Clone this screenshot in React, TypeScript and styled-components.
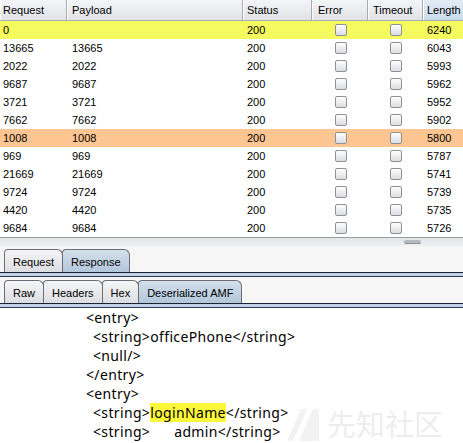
import React from "react";
import styled, { createGlobalStyle } from "styled-components";

const Global = createGlobalStyle`
  html, body { margin: 0; padding: 0; background: #ffffff; }
  body { width: 463px; height: 443px; overflow: hidden; font-family: "Liberation Sans", Arial, sans-serif; }
`;

const Page = styled.div`
  width: 463px;
  height: 443px;
  display: flex;
  flex-direction: column;
  position: relative;
  overflow: hidden;
  background: #ffffff;
`;

const COLS = "67px 176px 69px 56px 55px 40px";

const Table = styled.div`
  display: flex;
  flex-direction: column;
  border-bottom: 1px solid #9a9ca0;
`;

const HeaderRow = styled.div`
  display: grid;
  grid-template-columns: ${COLS};
  height: 20px;
  border-bottom: 1px solid #a9abaf;
`;

const HeaderCell = styled.div<{ $sorted?: boolean; $pad: number }>`
  display: flex;
  align-items: center;
  padding-left: ${(p) => p.$pad}px;
  font-size: 11px;
  color: #000;
  background: ${(p) =>
    p.$sorted
      ? "linear-gradient(#e2ecf6, #c9dbeb)"
      : "linear-gradient(#f4f5f7, #e1e3e7)"};
  border-right: 1px solid #a8abb0;
  box-shadow: inset 1px 0 0 #ffffff;
  &:last-child { border-right: none; }
`;

const Row = styled.div<{ $bg: string }>`
  display: grid;
  grid-template-columns: ${COLS};
  height: 18px;
  background: ${(p) => p.$bg};
`;

const Cell = styled.div<{ $pad: number; $center?: boolean }>`
  display: flex;
  align-items: center;
  justify-content: ${(p) => (p.$center ? "center" : "flex-start")};
  padding-left: ${(p) => p.$pad}px;
  font-size: 11px;
  color: #000;
`;

const Check = styled.span`
  width: 10px;
  height: 10px;
  border: 1px solid #8f9193;
  border-radius: 2px;
  background: linear-gradient(#fefefe, #dadde2);
  margin-left: 1px;
`;

const Scrollbar = styled.div`
  height: 8px;
  background: linear-gradient(#e4e5e8, #f0f0f2);
  display: flex;
  justify-content: flex-end;
  padding-right: 42px;
`;

const Thumb = styled.div`
  width: 17px;
  height: 3px;
  margin-top: 2px;
  border-radius: 2px;
  background: #b4b8c0;
  border-bottom: 1px solid #8a9099;
`;

const TabArea = styled.div`
  background: #f6f6f6;
  display: flex;
  flex-direction: column;
`;

const TabBar = styled.div<{ $top: number }>`
  display: flex;
  align-items: flex-end;
  padding: ${(p) => p.$top}px 0 0 4px;
  height: ${(p) => 23 + p.$top}px;
  box-sizing: border-box;
`;

const Tab = styled.div<{ $active?: boolean }>`
  height: 23px;
  box-sizing: border-box;
  display: flex;
  align-items: center;
  padding: 1px 8px 0 8px;
  font-size: 11px;
  color: #000;
  border: 1px solid #6b6e74;
  border-bottom: none;
  border-radius: 4px 6px 0 0;
  margin-left: -1px;
  background: ${(p) =>
    p.$active
      ? "linear-gradient(#d4e0ec, #b2c6da)"
      : "linear-gradient(#f6f6f8, #dcdde2)"};
  &:first-child { margin-left: 0; }
`;

const Band = styled.div`
  height: 3px;
  border-top: 1px solid #1b2233;
  border-bottom: 1px solid #2c3550;
  background: #c1d2e6;
`;

const Content = styled.div`
  flex: 1;
  background: #ffffff;
  padding: 0 0 0 86px;
  font-family: "Noto Sans", "DejaVu Sans", sans-serif;
  font-size: 14px;
  letter-spacing: 0.35px;
  color: #000;
`;

const Line = styled.div<{ $indent: number }>`
  height: 19px;
  line-height: 19px;
  padding-left: ${(p) => p.$indent}px;
  white-space: pre;
`;

const Mark = styled.span`
  background: #fdf83a;
`;

const Watermark = styled.div`
  position: absolute;
  left: 287px;
  top: 402px;
  display: flex;
  align-items: center;
  gap: 8px;
  color: #ededed;
  font-family: "Noto Sans CJK SC", sans-serif;
  font-size: 29px;
  letter-spacing: 0px;
  pointer-events: none;
`;

const rows: Array<[string, string, string, string]> = [
  ["0", "", "6240", "#f5fb5e"],
  ["13665", "13665", "6043", "#fff"],
  ["2022", "2022", "5993", "#fff"],
  ["9687", "9687", "5962", "#fff"],
  ["3721", "3721", "5952", "#fff"],
  ["7662", "7662", "5902", "#fff"],
  ["1008", "1008", "5800", "#fdc592"],
  ["969", "969", "5787", "#fff"],
  ["21669", "21669", "5741", "#fff"],
  ["9724", "9724", "5739", "#fff"],
  ["4420", "4420", "5735", "#fff"],
  ["9684", "9684", "5726", "#fff"],
];

export default function App() {
  return (
    <Page>
      <Global />
      <Table>
        <HeaderRow>
          <HeaderCell $pad={3}>Request</HeaderCell>
          <HeaderCell $pad={5}>Payload</HeaderCell>
          <HeaderCell $pad={4}>Status</HeaderCell>
          <HeaderCell $pad={6}>Error</HeaderCell>
          <HeaderCell $pad={5}>Timeout</HeaderCell>
          <HeaderCell $pad={4} $sorted>Length</HeaderCell>
        </HeaderRow>
        {rows.map(([req, pay, len, bg]) => (
          <Row key={req} $bg={bg}>
            <Cell $pad={3}>{req}</Cell>
            <Cell $pad={5}>{pay}</Cell>
            <Cell $pad={4}>200</Cell>
            <Cell $pad={0} $center><Check /></Cell>
            <Cell $pad={0} $center><Check /></Cell>
            <Cell $pad={4}>{len}</Cell>
          </Row>
        ))}
      </Table>
      <Scrollbar><Thumb /></Scrollbar>
      <TabArea>
        <TabBar $top={3}>
          <Tab>Request</Tab>
          <Tab $active>Response</Tab>
        </TabBar>
        <Band />
        <TabBar $top={3}>
          <Tab>Raw</Tab>
          <Tab>Headers</Tab>
          <Tab>Hex</Tab>
          <Tab $active>Deserialized AMF</Tab>
        </TabBar>
        <Band />
      </TabArea>
      <Content>
        <Line $indent={0}>{"<entry>"}</Line>
        <Line $indent={7}>{"<string>officePhone</string>"}</Line>
        <Line $indent={7}>{"<null/>"}</Line>
        <Line $indent={0}>{"</entry>"}</Line>
        <Line $indent={0}>{"<entry>"}</Line>
        <Line $indent={7}>{"<string>"}<Mark>loginName</Mark>{"</string>"}</Line>
        <Line $indent={7}>{"<string>      admin</string>"}</Line>
      </Content>
      <Watermark>
        <svg width="32" height="36" viewBox="0 0 32 36">
          <polygon points="0,36 14,4 20,4 6,36" fill="#f2f2f2" />
          <polygon points="12,36 26,4 32,4 32,36" fill="#f2f2f2" />
        </svg>
        <span>先知社区</span>
      </Watermark>
    </Page>
  );
}
